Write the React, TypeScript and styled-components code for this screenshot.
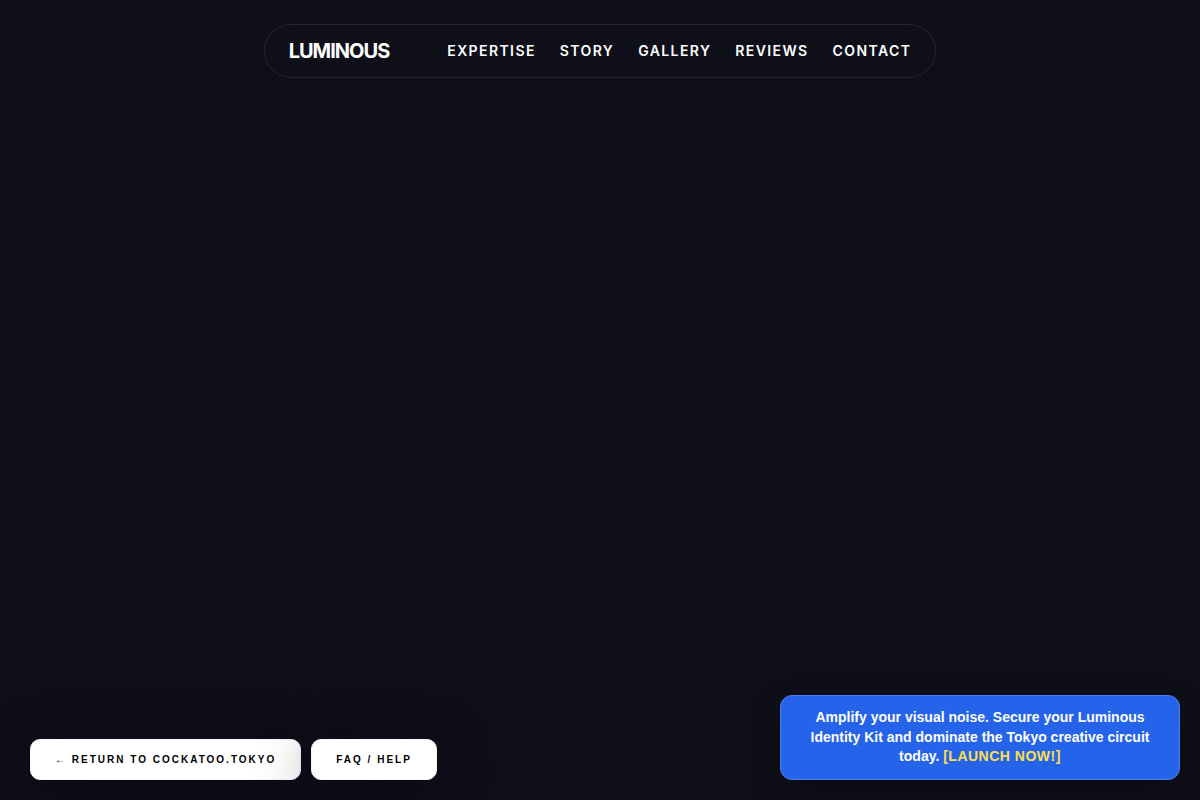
import React from 'react';
import styled, { createGlobalStyle } from 'styled-components';

const GlobalStyle = createGlobalStyle`
  *, *::before, *::after { box-sizing: border-box; }
  body {
    margin: 0;
    background: #0f0f1a;
    color: #ffffff;
    font-family: Inter, sans-serif;
  }
`;

const Page = styled.div`
  min-height: 100vh;
  display: flex;
  flex-direction: column;
  justify-content: space-between;
`;

const Header = styled.header`
  display: flex;
  justify-content: center;
  padding: 24px 20px 0;
`;

const Nav = styled.nav`
  display: flex;
  align-items: center;
  gap: 58px;
  padding: 12px 24px;
  border: 1px solid #252532;
  border-radius: 999px;
`;

const Brand = styled.a`
  font-size: 20px;
  line-height: 28px;
  font-weight: 700;
  letter-spacing: -1px;
  color: #ffffff;
  text-decoration: none;
`;

const Links = styled.div`
  display: flex;
  gap: 24px;
`;

const NavLink = styled.a`
  font-size: 14px;
  line-height: 20px;
  font-weight: 600;
  letter-spacing: 1.4px;
  text-transform: uppercase;
  color: #ffffff;
  text-decoration: none;
`;

const Footer = styled.footer`
  display: flex;
  justify-content: space-between;
  align-items: flex-end;
  gap: 20px;
  padding: 0 20px 20px 30px;
  font-family: "Liberation Sans", Arial, sans-serif;
`;

const Actions = styled.div`
  display: flex;
  gap: 10px;
`;

const Action = styled.a`
  padding: 12px 24px;
  border: 1px solid #f1f5f9;
  border-radius: 10px;
  background: #ffffff;
  box-shadow: 0 10px 50px rgba(0, 0, 16, 0.5);
  color: #000000;
  font-size: 10px;
  line-height: 15px;
  font-weight: 700;
  letter-spacing: 2px;
  text-transform: uppercase;
  text-decoration: none;
  white-space: nowrap;
`;

const Promo = styled.a`
  flex: 0 1 400px;
  padding: 12px 24px;
  border: 1px solid #517ee9;
  border-radius: 12px;
  background: #2563eb;
  box-shadow: 0 10px 30px rgba(0, 0, 0, 0.3);
  color: #ffffff;
  font-size: 14px;
  line-height: 1.4;
  font-weight: 700;
  text-align: center;
  text-decoration: none;
`;

const Launch = styled.span`
  color: #fde047;
  letter-spacing: 0.5px;
`;

const links = ['Expertise', 'Story', 'Gallery', 'Reviews', 'Contact'];

export default function App() {
  return (
    <Page>
      <GlobalStyle />
      <Header>
        <Nav>
          <Brand href="#top">LUMINOUS</Brand>
          <Links>
            {links.map((label) => (
              <NavLink key={label} href={`#${label.toLowerCase()}`}>{label}</NavLink>
            ))}
          </Links>
        </Nav>
      </Header>
      <Footer>
        <Actions>
          <Action href="#home">← Return to cockatoo.tokyo</Action>
          <Action href="#faq">FAQ / Help</Action>
        </Actions>
        <Promo href="#launch">
          Amplify your visual noise. Secure your Luminous Identity Kit and dominate the Tokyo creative circuit today. <Launch>[LAUNCH NOW!]</Launch>
        </Promo>
      </Footer>
    </Page>
  );
}
